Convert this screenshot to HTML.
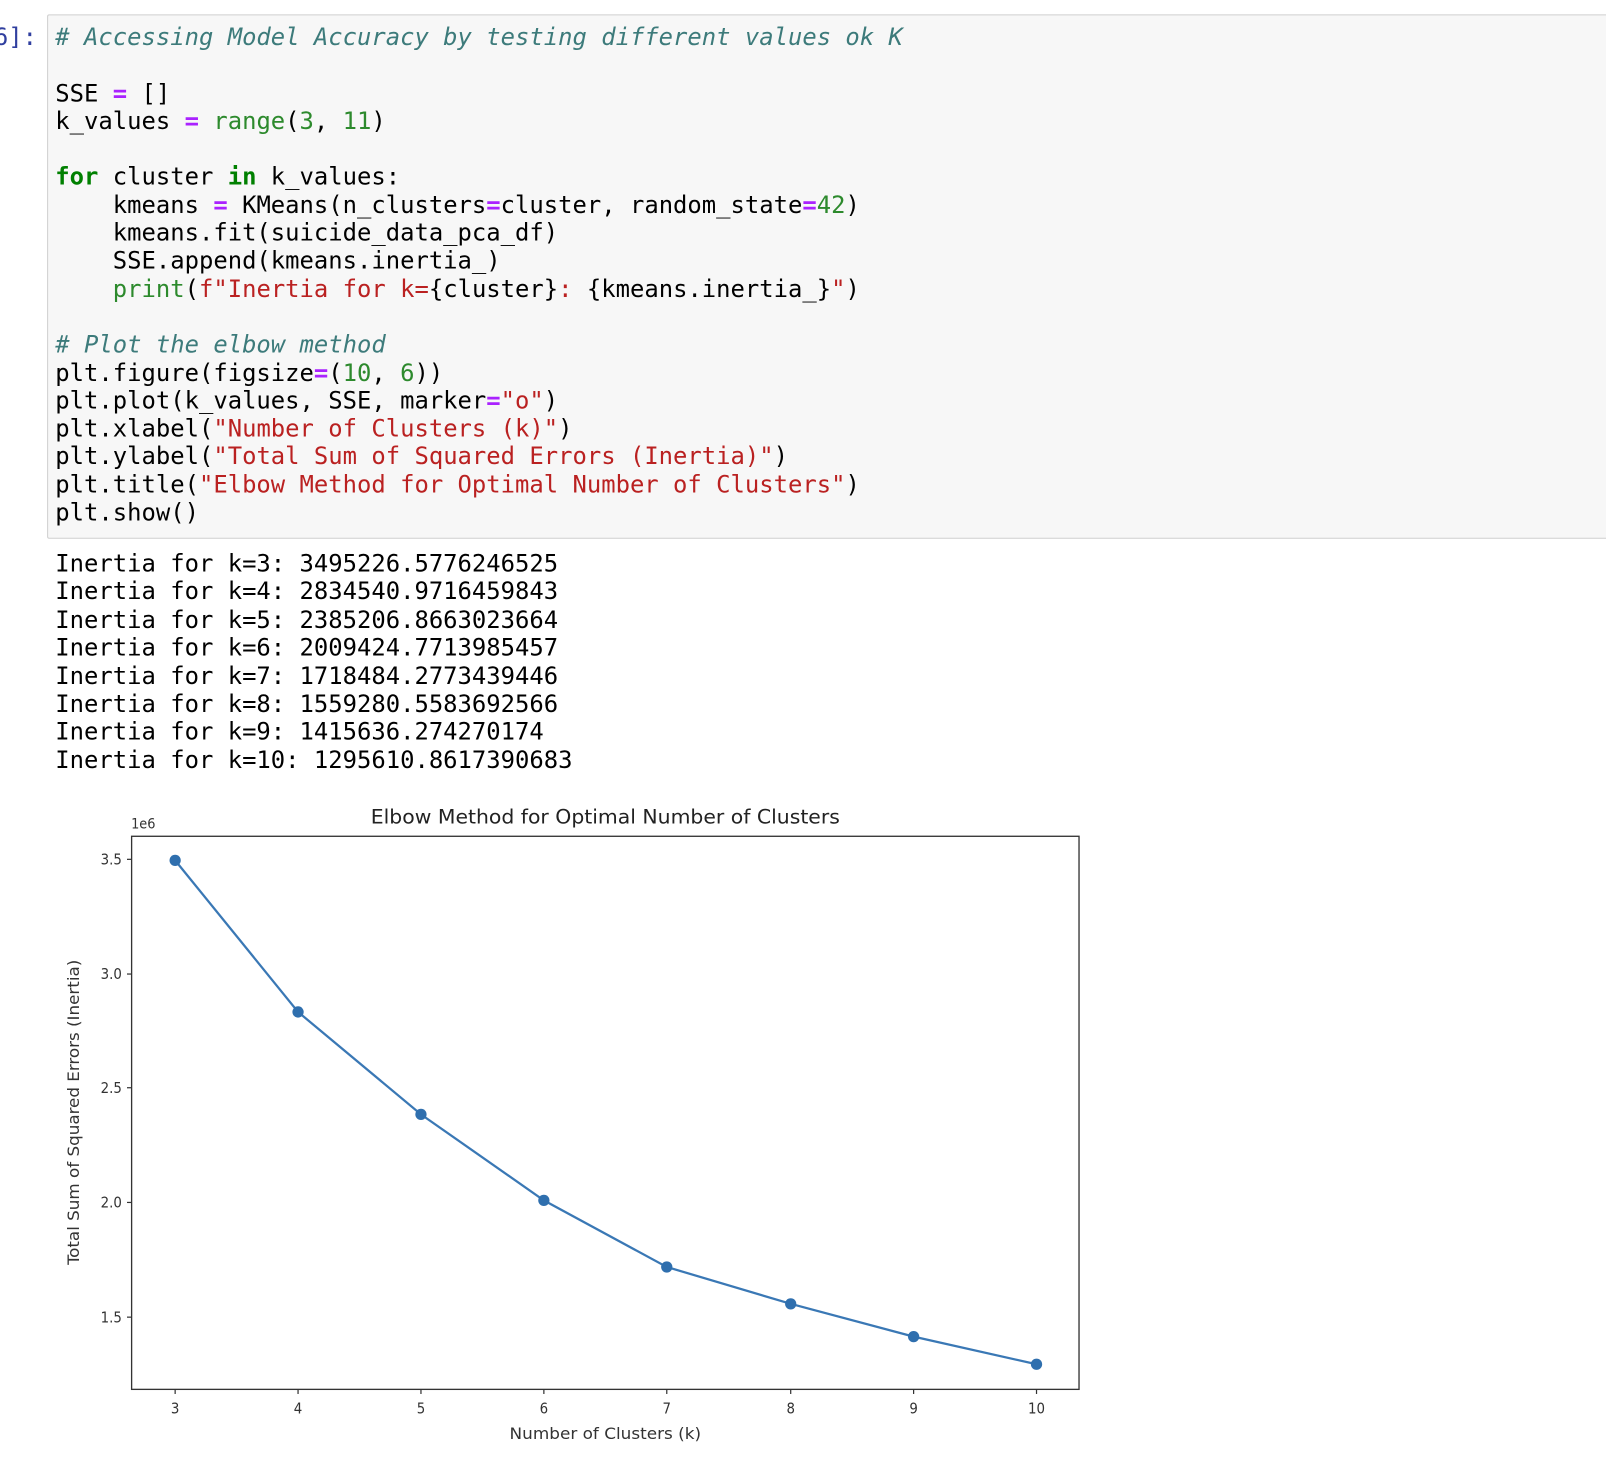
<!DOCTYPE html>
<html><head><meta charset="utf-8"><style>
html,body{margin:0;padding:0;background:#fff;width:1606px;height:1474px;overflow:hidden}
#w{position:absolute;left:0;top:0;width:1568px;height:1440px;transform:scale(1.02423);transform-origin:0 0}
.prompt{position:absolute;left:-6px;top:23px;font:23.3px/27.3px "DejaVu Sans Mono",monospace;color:#303f9f}
.cell{position:absolute;left:46px;top:14px;width:1560px;height:510px;background:#f7f7f7;border:1px solid #cfcfcf;border-radius:2px}
pre{margin:0;font-family:"DejaVu Sans Mono","Liberation Mono",monospace;font-size:23.3px;line-height:27.3px;color:#000}
.code{position:absolute;left:54px;top:23px}
.out{position:absolute;left:54px;top:537px;line-height:27.4px}
.c{color:#3d7b7b;font-style:italic}.k{color:#008000;font-weight:bold}.o{color:#aa22ff;font-weight:bold}
.n{color:#2d8a2d}.s{color:#ba2121}.b{color:#2d8a2d}
svg{position:absolute;left:0;top:0}
</style></head><body><div id="w">
<div class="prompt">6]:</div>
<div class="cell"></div>
<pre class="code"><span class="c"># Accessing Model Accuracy by testing different values ok K</span>

SSE <span class="o">=</span> []
k_values <span class="o">=</span> <span class="b">range</span>(<span class="n">3</span>, <span class="n">11</span>)

<span class="k">for</span> cluster <span class="k">in</span> k_values:
    kmeans <span class="o">=</span> KMeans(n_clusters<span class="o">=</span>cluster, random_state<span class="o">=</span><span class="n">42</span>)
    kmeans.fit(suicide_data_pca_df)
    SSE.append(kmeans.inertia_)
    <span class="b">print</span>(<span class="s">f"Inertia for k=</span>{cluster}<span class="s">: </span>{kmeans.inertia_}<span class="s">"</span>)

<span class="c"># Plot the elbow method</span>
plt.figure(figsize<span class="o">=</span>(<span class="n">10</span>, <span class="n">6</span>))
plt.plot(k_values, SSE, marker<span class="o">=</span><span class="s">"o"</span>)
plt.xlabel(<span class="s">"Number of Clusters (k)"</span>)
plt.ylabel(<span class="s">"Total Sum of Squared Errors (Inertia)"</span>)
plt.title(<span class="s">"Elbow Method for Optimal Number of Clusters"</span>)
plt.show()</pre>
<pre class="out">Inertia for k=3: 3495226.5776246525
Inertia for k=4: 2834540.9716459843
Inertia for k=5: 2385206.8663023664
Inertia for k=6: 2009424.7713985457
Inertia for k=7: 1718484.2773439446
Inertia for k=8: 1559280.5583692566
Inertia for k=9: 1415636.274270174
Inertia for k=10: 1295610.8617390683</pre>
<svg width="1568" height="1440" viewBox="0 0 1568 1440" font-family="DejaVu Sans Condensed, DejaVu Sans, sans-serif" fill="#262626">
<rect x="128.5" y="816.5" width="925" height="540" fill="none" stroke="#333" stroke-width="1.3"/>
<text x="591" y="804" font-size="19" text-anchor="middle" textLength="458" lengthAdjust="spacingAndGlyphs" fill="#222">Elbow Method for Optimal Number of Clusters</text>
<text x="128" y="809" font-size="14" fill="#333">1e6</text>
<g stroke="#333" stroke-width="1.2">
<line x1="124" y1="839" x2="128" y2="839"/><line x1="124" y1="951" x2="128" y2="951"/><line x1="124" y1="1062" x2="128" y2="1062"/><line x1="124" y1="1174" x2="128" y2="1174"/><line x1="124" y1="1286" x2="128" y2="1286"/>
<line x1="171" y1="1357" x2="171" y2="1361"/><line x1="291" y1="1357" x2="291" y2="1361"/><line x1="411" y1="1357" x2="411" y2="1361"/><line x1="531" y1="1357" x2="531" y2="1361"/><line x1="651" y1="1357" x2="651" y2="1361"/><line x1="772" y1="1357" x2="772" y2="1361"/><line x1="892" y1="1357" x2="892" y2="1361"/><line x1="1012" y1="1357" x2="1012" y2="1361"/>
</g>
<g font-size="14.5" text-anchor="end" fill="#333">
<text x="119" y="844">3.5</text><text x="119" y="956">3.0</text><text x="119" y="1067">2.5</text><text x="119" y="1179">2.0</text><text x="119" y="1291">1.5</text>
</g>
<g font-size="14.5" text-anchor="middle" fill="#333">
<text x="171" y="1380">3</text><text x="291" y="1380">4</text><text x="411" y="1380">5</text><text x="531" y="1380">6</text><text x="651" y="1380">7</text><text x="772" y="1380">8</text><text x="892" y="1380">9</text><text x="1012" y="1380">10</text>
</g>
<text x="591" y="1405" font-size="16" text-anchor="middle" textLength="187" lengthAdjust="spacingAndGlyphs" fill="#333">Number of Clusters (k)</text>
<text transform="translate(77,1086) rotate(-90)" font-size="16" text-anchor="middle" textLength="298" lengthAdjust="spacingAndGlyphs" fill="#333">Total Sum of Squared Errors (Inertia)</text>
<polyline fill="none" stroke="#3a78b5" stroke-width="2.2" points="171,840 291,988 411,1088 531,1172 651,1237 772,1273 892,1305 1012,1332"/>
<g fill="#2f6fae">
<circle cx="171" cy="840" r="5.5"/><circle cx="291" cy="988" r="5.5"/><circle cx="411" cy="1088" r="5.5"/><circle cx="531" cy="1172" r="5.5"/><circle cx="651" cy="1237" r="5.5"/><circle cx="772" cy="1273" r="5.5"/><circle cx="892" cy="1305" r="5.5"/><circle cx="1012" cy="1332" r="5.5"/>
</g>
</svg>
</div></body></html>
